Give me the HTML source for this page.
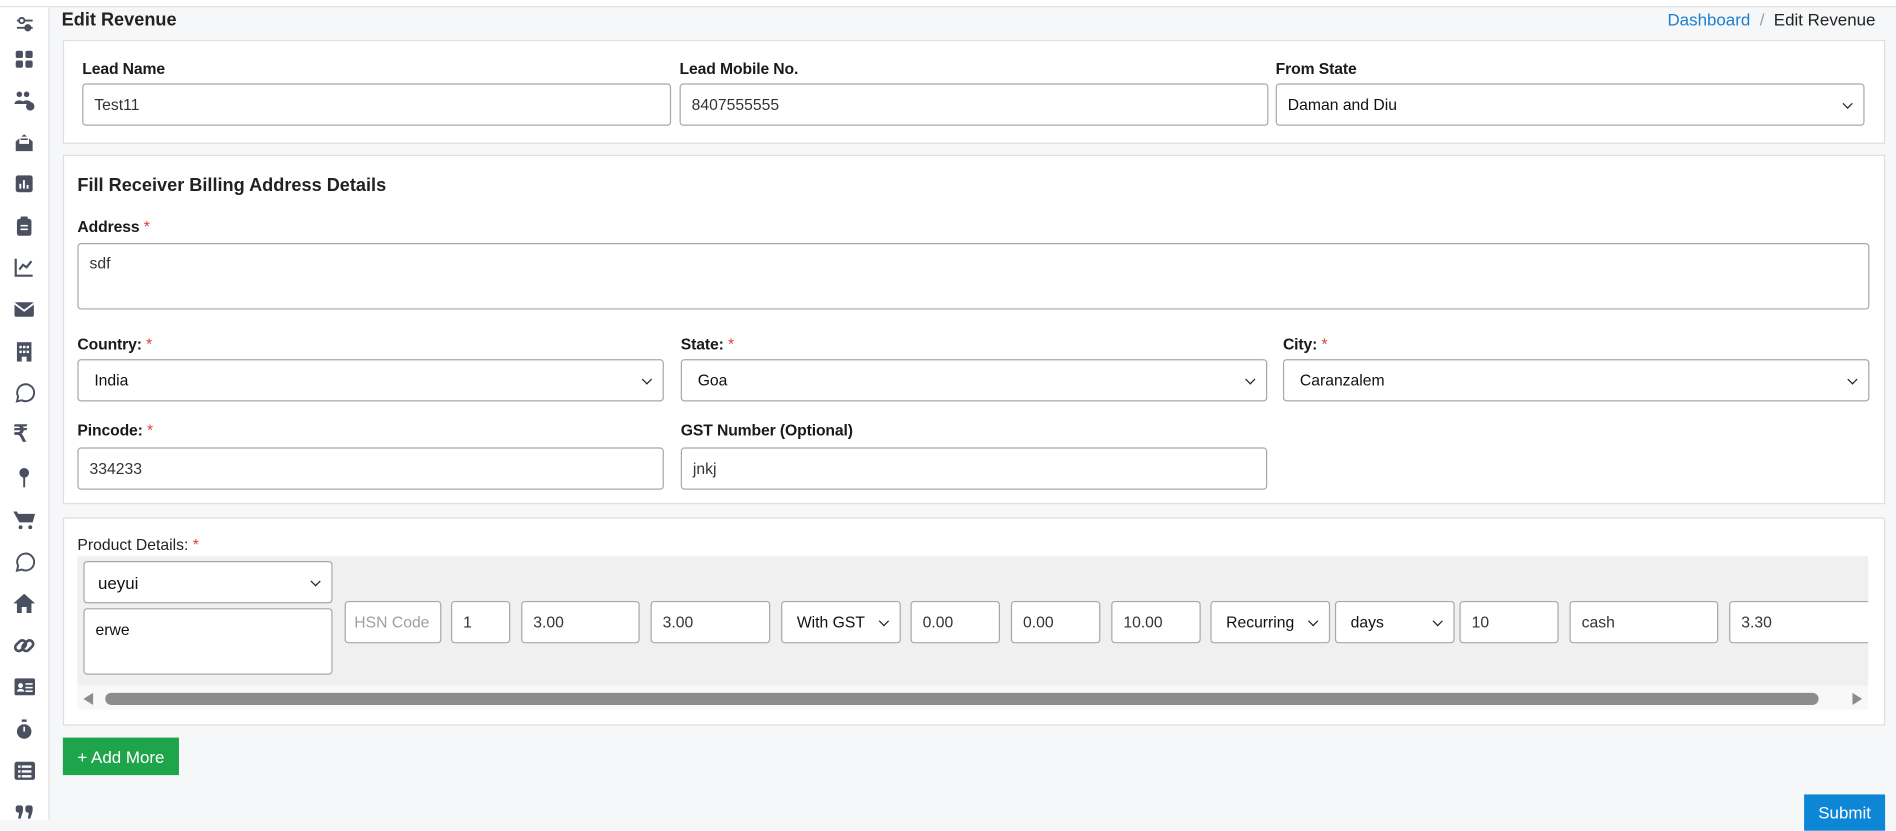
<!DOCTYPE html>
<html><head><meta charset="utf-8"><style>
html,body{margin:0;padding:0;width:1896px;height:820px;overflow:hidden;background:#f6f7f9}
#w{position:absolute;left:0;top:0;width:1568px;height:678px;transform:scale(1.20918);transform-origin:0 0;font-family:"Liberation Sans",sans-serif;color:#222}
.a{position:absolute;box-sizing:border-box}
.card{background:#fff;border:1px solid #dedede}
.lbl{font-size:13px;font-weight:bold;color:#1a1a1a;letter-spacing:-0.1px}
.lbl b{color:#e53935;font-weight:normal}
.in{background:#fff;border:1px solid #a8a8a8;border-radius:3px;font-size:13px;padding-left:9px;display:flex;align-items:center;color:#333}
.sel:after{content:"";position:absolute;right:10px;top:50%;width:5px;height:5px;border-right:1.8px solid #222;border-bottom:1.8px solid #222;transform:translateY(-70%) rotate(45deg)}
.ic{position:absolute;left:11px;width:18px;height:18px}
</style></head><body><div id="w">
<div class="a" style="left:0;top:0;width:1568px;height:6px;background:#fff;border-bottom:1px solid #e0e0e0"></div>
<div class="a" style="left:0;top:6px;width:41px;height:672px;background:#fff;border-right:1px solid #e0e0e0"></div>
<svg class="ic" style="top:11px" viewBox="0 0 18 18" fill="none" stroke="#4a5060" stroke-width="1.6"><line x1="3" y1="6" x2="16" y2="6"/><circle cx="7" cy="6" r="2.2" fill="#fff"/><line x1="3" y1="12" x2="16" y2="12"/><circle cx="12" cy="12" r="2.2" fill="#4a5060"/></svg>
<svg class="ic" style="top:40px" viewBox="0 0 18 18" fill="#4a5060"><rect x="2" y="2" width="6" height="6" rx="1.5"/><rect x="10" y="2" width="6" height="6" rx="1.5"/><rect x="2" y="10" width="6" height="6" rx="1.5"/><rect x="10" y="10" width="6" height="6" rx="1.5"/></svg>
<svg class="ic" style="top:74px" viewBox="0 0 18 18" fill="#4a5060"><circle cx="5" cy="4" r="2.3"/><circle cx="11" cy="4" r="2.3"/><path d="M1 12c0-4 8-4 8 0z"/><path d="M7 12c0-4 8-4 8 0z"/><circle cx="14" cy="14" r="3.5"/></svg>
<svg class="ic" style="top:109px" viewBox="0 0 18 18" fill="#4a5060"><path d="M2 8l7-6 7 6v8H2z"/><rect x="5" y="4" width="8" height="6" fill="#fff"/><rect x="6" y="5.5" width="6" height="1.3"/></svg>
<svg class="ic" style="top:143px" viewBox="0 0 18 18" fill="#4a5060"><rect x="2" y="2" width="14" height="14" rx="2"/><rect x="5" y="9" width="1.6" height="4" fill="#fff"/><rect x="8" y="6" width="1.6" height="7" fill="#fff"/><rect x="11" y="10" width="1.6" height="3" fill="#fff"/></svg>
<svg class="ic" style="top:178px" viewBox="0 0 18 18" fill="#4a5060"><rect x="3" y="3" width="12" height="14" rx="2"/><rect x="6" y="1" width="6" height="4" rx="1"/><rect x="6" y="8" width="6" height="1.3" fill="#fff"/><rect x="6" y="11" width="6" height="1.3" fill="#fff"/></svg>
<svg class="ic" style="top:212px" viewBox="0 0 18 18" fill="none" stroke="#4a5060" stroke-width="1.8"><path d="M2 2v14h14"/><path d="M5 11l3-4 3 2 4-5"/></svg>
<svg class="ic" style="top:247px" viewBox="0 0 18 18" fill="#4a5060"><rect x="1" y="3" width="16" height="12" rx="1.5"/><path d="M1 4l8 6 8-6" stroke="#fff" stroke-width="1.5" fill="none"/></svg>
<svg class="ic" style="top:282px" viewBox="0 0 18 18" fill="#4a5060"><rect x="3" y="1" width="12" height="16"/><g fill="#fff"><rect x="5" y="4" width="2" height="2"/><rect x="8" y="4" width="2" height="2"/><rect x="11" y="4" width="2" height="2"/><rect x="5" y="8" width="2" height="2"/><rect x="8" y="8" width="2" height="2"/><rect x="11" y="8" width="2" height="2"/><rect x="7" y="13" width="4" height="4"/></g></svg>
<svg class="ic" style="top:316px" viewBox="0 0 18 18" fill="none" stroke="#4a5060" stroke-width="1.6"><path d="M3 16l1-4a7 7 0 1 1 3 3z"/></svg>
<div class="a" style="left:11px;top:348px;font-size:19px;font-weight:bold;color:#4a5060">₹</div>
<svg class="ic" style="top:386px" viewBox="0 0 18 18" fill="#4a5060"><circle cx="9" cy="5" r="4"/><rect x="8.2" y="8" width="1.6" height="9"/></svg>
<svg class="ic" style="top:421px" viewBox="0 0 18 18" fill="#4a5060"><path d="M0 2h3l1 2h14l-2 7H5z"/><circle cx="6" cy="15" r="1.6"/><circle cx="14" cy="15" r="1.6"/></svg>
<svg class="ic" style="top:456px" viewBox="0 0 18 18" fill="none" stroke="#4a5060" stroke-width="1.6"><path d="M3 16l1-4a7 7 0 1 1 3 3z"/></svg>
<svg class="ic" style="top:490px" viewBox="0 0 18 18" fill="#4a5060"><path d="M9 1l9 8h-3v8h-4v-5H7v5H3V9H0z"/></svg>
<svg class="ic" style="top:525px" viewBox="0 0 18 18" fill="none" stroke="#4a5060" stroke-width="2.2"><rect x="1" y="6" width="10" height="6" rx="3" transform="rotate(-45 6 9)"/><rect x="7" y="6" width="10" height="6" rx="3" transform="rotate(-45 12 9)"/></svg>
<svg class="ic" style="top:559px" viewBox="0 0 18 18" fill="#4a5060"><rect x="1" y="2" width="17" height="14" rx="1.5"/><circle cx="6" cy="8" r="2" fill="#fff"/><path d="M3 13c0-3 6-3 6 0z" fill="#fff"/><g fill="#fff"><rect x="10" y="6" width="6" height="1.3"/><rect x="10" y="9" width="6" height="1.3"/><rect x="10" y="12" width="6" height="1.3"/></g></svg>
<svg class="ic" style="top:594px" viewBox="0 0 18 18" fill="#4a5060"><circle cx="9" cy="11" r="6"/><rect x="7" y="1" width="4" height="2"/><rect x="8.3" y="7" width="1.4" height="4" fill="#fff"/></svg>
<svg class="ic" style="top:628px" viewBox="0 0 18 18" fill="#4a5060"><rect x="1" y="2" width="17" height="15" rx="2"/><g fill="#fff"><rect x="4" y="5" width="2" height="2"/><rect x="7" y="5" width="8" height="2"/><rect x="4" y="9" width="2" height="2"/><rect x="7" y="9" width="8" height="2"/><rect x="4" y="13" width="2" height="2"/><rect x="7" y="13" width="8" height="2"/></g></svg>
<svg class="ic" style="top:664px" viewBox="0 0 18 18" fill="#4a5060"><rect x="2" y="2" width="6" height="6" rx="2"/><rect x="10" y="2" width="6" height="6" rx="2"/><path d="M5 7h3l-2 6H4z"/><path d="M13 7h3l-2 6h-2z"/></svg>

<div class="a" style="left:51px;top:8px;font-size:15px;font-weight:bold">Edit Revenue</div>
<div class="a" style="left:1379px;top:8px;font-size:14px;color:#999"><span style="color:#1b7fcf">Dashboard</span>&nbsp;&nbsp;/&nbsp;&nbsp;<span style="color:#222">Edit Revenue</span></div>

<div class="a card" style="left:52px;top:33px;width:1507px;height:86px"></div>
<div class="a lbl" style="left:68px;top:49px">Lead Name</div>
<div class="a lbl" style="left:562px;top:49px">Lead Mobile No.</div>
<div class="a lbl" style="left:1055px;top:49px">From State</div>
<div class="a in" style="left:68px;top:69px;width:487px;height:35px">Test11</div>
<div class="a in" style="left:562px;top:69px;width:487px;height:35px">8407555555</div>
<div class="a in sel" style="left:1055px;top:69px;width:487px;height:35px;color:#111">Daman and Diu</div>

<div class="a card" style="left:52px;top:128px;width:1507px;height:289px"></div>
<div class="a" style="left:64px;top:145px;font-size:15px;font-weight:bold">Fill Receiver Billing Address Details</div>
<div class="a lbl" style="left:64px;top:180px">Address <b>*</b></div>
<div class="a in" style="left:64px;top:201px;width:1482px;height:55px;align-items:flex-start;padding-top:8px">sdf</div>
<div class="a lbl" style="left:64px;top:277px">Country: <b>*</b></div>
<div class="a lbl" style="left:563px;top:277px">State: <b>*</b></div>
<div class="a lbl" style="left:1061px;top:277px">City: <b>*</b></div>
<div class="a in sel" style="left:64px;top:297px;width:485px;height:35px;padding-left:13px;color:#111">India</div>
<div class="a in sel" style="left:563px;top:297px;width:485px;height:35px;padding-left:13px;color:#111">Goa</div>
<div class="a in sel" style="left:1061px;top:297px;width:485px;height:35px;padding-left:13px;color:#111">Caranzalem</div>
<div class="a lbl" style="left:64px;top:348px">Pincode: <b>*</b></div>
<div class="a lbl" style="left:563px;top:348px">GST Number (Optional)</div>
<div class="a in" style="left:64px;top:370px;width:485px;height:35px">334233</div>
<div class="a in" style="left:563px;top:370px;width:485px;height:35px">jnkj</div>

<div class="a card" style="left:52px;top:428px;width:1507px;height:172px"></div>
<div class="a" style="left:64px;top:443px;font-size:13px">Product Details: <span style="color:#e53935">*</span></div>
<div class="a" style="left:64px;top:460px;width:1481px;height:107px;background:#f0f0f0;overflow:hidden">
<div class="a in sel" style="left:5px;top:4px;width:206px;height:35px;padding-left:11px;color:#111;font-size:14px">ueyui</div>
<div class="a in" style="left:5px;top:43px;width:206px;height:55px;align-items:flex-start;padding-top:9px;color:#111">erwe</div>
<div class="a in" style="left:221px;top:37px;width:80px;height:35px;color:#9aa0a8;overflow:hidden;white-space:nowrap;padding-left:7px">HSN Code</div>
<div class="a in" style="left:309px;top:37px;width:49px;height:35px">1</div>
<div class="a in" style="left:367px;top:37px;width:98px;height:35px">3.00</div>
<div class="a in" style="left:474px;top:37px;width:99px;height:35px">3.00</div>
<div class="a in sel" style="left:582px;top:37px;width:99px;height:35px;padding-left:12px;color:#111">With GST</div>
<div class="a in" style="left:689px;top:37px;width:74px;height:35px">0.00</div>
<div class="a in" style="left:772px;top:37px;width:74px;height:35px">0.00</div>
<div class="a in" style="left:855px;top:37px;width:74px;height:35px">10.00</div>
<div class="a in sel" style="left:937px;top:37px;width:99px;height:35px;padding-left:12px;color:#111;overflow:hidden;white-space:nowrap">Recurring</div>
<div class="a in sel" style="left:1040px;top:37px;width:99px;height:35px;padding-left:12px;color:#111">days</div>
<div class="a in" style="left:1143px;top:37px;width:82px;height:35px">10</div>
<div class="a in" style="left:1234px;top:37px;width:123px;height:35px">cash</div>
<div class="a in" style="left:1366px;top:37px;width:130px;height:35px">3.30</div>
</div>
<div class="a" style="left:64px;top:567px;width:1481px;height:20px;background:#f8f8f8"></div>
<div class="a" style="left:87px;top:573px;width:1417px;height:10px;background:#8c8c8c;border-radius:5px"></div>
<div class="a" style="left:69px;top:573px;width:0;height:0;border-top:5px solid transparent;border-bottom:5px solid transparent;border-right:8px solid #8c8c8c"></div>
<div class="a" style="left:1532px;top:573px;width:0;height:0;border-top:5px solid transparent;border-bottom:5px solid transparent;border-left:8px solid #8c8c8c"></div>

<div class="a" style="left:52px;top:610px;width:96px;height:31px;background:#1ea44b;color:#fff;font-size:14px;display:flex;align-items:center;justify-content:center">+ Add More</div>
<div class="a" style="left:1492px;top:657px;width:67px;height:30px;background:#0d86d6;color:#fff;font-size:14px;text-align:center;padding-top:7px">Submit</div>
</div></body></html>
